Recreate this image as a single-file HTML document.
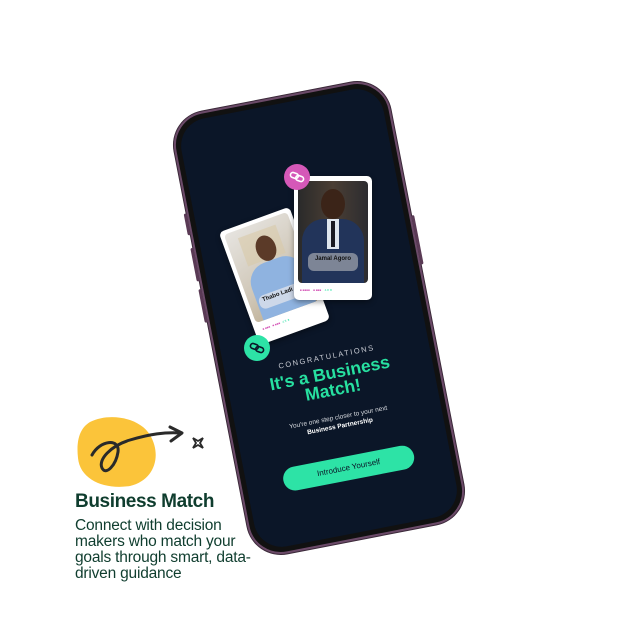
<!DOCTYPE html>
<html><head><meta charset="utf-8"><style>
*{margin:0;padding:0;box-sizing:border-box}
body{width:637px;height:637px;background:#fff;position:relative;overflow:hidden;font-family:"Liberation Sans",sans-serif}
.abs{position:absolute}
#phone{left:209px;top:93px;width:220px;height:450px;transform:rotate(-11deg);border-radius:34px;background:#111;border:2px solid #6b4a68;box-shadow:0 0 0 1px #3a2838}
#screen{position:absolute;left:5px;top:5px;right:5px;bottom:5px;border-radius:28px;background:#0b1628;overflow:hidden}
.t{position:absolute;left:0;width:206px;text-align:center}
.card{position:absolute;background:#fff;border-radius:5px;box-shadow:0 2px 6px rgba(0,0,0,.4)}
</style></head><body>
<div id="phone" class="abs">
 <div class="abs" style="left:-5px;top:95px;width:3px;height:22px;background:#5a3a55;border-radius:2px"></div>
 <div class="abs" style="left:-5px;top:130px;width:3px;height:34px;background:#5a3a55;border-radius:2px"></div>
 <div class="abs" style="left:-5px;top:172px;width:3px;height:34px;background:#5a3a55;border-radius:2px"></div>
 <div class="abs" style="right:-5px;top:140px;width:3px;height:50px;background:#5a3a55;border-radius:2px"></div>
 <div id="screen">
  <div class="t" style="top:253px;font-size:7.5px;letter-spacing:1.6px;color:#c9ccd4">CONGRATULATIONS</div>
  <div class="t" style="top:266px;font-size:17.5px;font-weight:bold;color:#27e0a0;line-height:17px">It's a Business<br>Match!</div>
  <div class="t" style="top:315px;font-size:6.5px;color:#d8dbe0;line-height:9px">You're one step closer to your next<br><b style="color:#fff">Business Partnership</b></div>
  <div class="abs" style="left:37px;top:359px;width:133px;height:24px;border-radius:12px;background:#2de3a6;color:#0b1628;font-size:8px;text-align:center;line-height:24px">Introduce Yourself</div>
 </div>
</div>
<!-- Thabo card -->
<div class="card" style="left:237px;top:216px;width:75px;height:120px;transform:rotate(-20deg)">
 <div class="abs" style="left:4px;top:4px;width:67px;height:94px;border-radius:4px;overflow:hidden;background:linear-gradient(160deg,#e6e4e0,#cfc6b6 60%,#b9a88a)">
  <div class="abs" style="left:12px;top:8px;width:40px;height:30px;background:#d8c9a8;opacity:.6"></div>
  <div class="abs" style="left:25px;top:14px;width:20px;height:26px;border-radius:50%;background:#5b3a28"></div>
  <div class="abs" style="left:8px;top:40px;width:56px;height:60px;border-radius:20px 20px 0 0;background:#8fb3e0"></div>
  <div class="abs" style="left:10px;top:70px;width:50px;height:14px;border-radius:6px;background:rgba(220,225,235,.8);font-size:6px;font-weight:bold;color:#111;padding:2px 4px">Thabo Ladi</div>
 </div>
 <div class="abs" style="left:8px;top:104px;font-size:3px;color:#d558b8">■ ■■■ &nbsp; ■ ■■■ &nbsp; <span style="color:#2de3a6">4.8 ★</span></div>
</div>
<!-- Jamal card -->
<div class="card" style="left:294px;top:176px;width:78px;height:124px">
 <div class="abs" style="left:4px;top:5px;width:70px;height:102px;border-radius:4px;overflow:hidden;background:linear-gradient(90deg,#2a2a2a,#4a3e34 50%,#2c2c30)">
  <div class="abs" style="left:23px;top:8px;width:24px;height:30px;border-radius:50%;background:#3b2418"></div>
  <div class="abs" style="left:4px;top:38px;width:62px;height:70px;border-radius:22px 22px 0 0;background:#22345a"></div>
  <div class="abs" style="left:29px;top:38px;width:12px;height:30px;background:#dfe6ee"></div>
  <div class="abs" style="left:33px;top:40px;width:4px;height:26px;background:#1a1a22"></div>
  <div class="abs" style="left:10px;top:72px;width:50px;height:18px;border-radius:6px;background:rgba(200,200,200,.55);font-size:6px;font-weight:bold;color:#111;text-align:center;padding-top:3px">Jamal Agoro</div>
 </div>
 <div class="abs" style="left:6px;top:112px;font-size:3px;color:#d558b8">■ ■■■■ &nbsp;&nbsp; ■ ■■■ &nbsp;&nbsp; <span style="color:#2de3a6">4.8 ★</span></div>
</div>
<!-- link circles -->
<svg class="abs" style="left:284px;top:164px" width="26" height="26"><circle cx="13" cy="13" r="13" fill="#d558b8"/><g fill="none" stroke="#fff" stroke-width="1.6"><rect x="6" y="10" width="8" height="5" rx="2.5" transform="rotate(20 13 13)"/><rect x="12" y="11" width="8" height="5" rx="2.5" transform="rotate(20 13 13)"/></g></svg>
<svg class="abs" style="left:244px;top:335px" width="26" height="26"><circle cx="13" cy="13" r="13" fill="#2de3a6"/><g fill="none" stroke="#0b1628" stroke-width="1.6"><rect x="6" y="10" width="8" height="5" rx="2.5" transform="rotate(20 13 13)"/><rect x="12" y="11" width="8" height="5" rx="2.5" transform="rotate(20 13 13)"/></g></svg>
<!-- logo -->
<svg class="abs" style="left:70px;top:410px" width="140" height="80">
 <path d="M20 12 C40 2 70 8 80 25 C92 45 85 70 60 76 C35 80 10 70 8 48 C6 30 10 18 20 12Z" fill="#fbc43a"/>
 <path d="M22 45 C30 30 50 28 48 42 C46 55 36 66 32 58 C28 50 40 36 60 30 C80 24 95 22 111 23" fill="none" stroke="#2a2a2a" stroke-width="3" stroke-linecap="round"/>
 <path d="M100 17 L112 23 L101 31" fill="none" stroke="#2a2a2a" stroke-width="3" stroke-linecap="round" stroke-linejoin="round"/>
 <path d="M123 28 L128 31 L133 28 L130 33 L133 38 L128 35 L123 38 L126 33Z" fill="none" stroke="#2a2a2a" stroke-width="1.8"/>
</svg>
<div class="abs" style="left:75px;top:491px;font-size:19px;font-weight:bold;color:#0f3d2e;letter-spacing:-0.4px">Business Match</div>
<div class="abs" style="left:75px;top:518px;width:240px;font-size:15.5px;line-height:16px;color:#0f3d2e;letter-spacing:-0.2px;white-space:nowrap">Connect with decision<br>makers who match your<br>goals through smart, data-<br>driven guidance</div>
</body></html>
